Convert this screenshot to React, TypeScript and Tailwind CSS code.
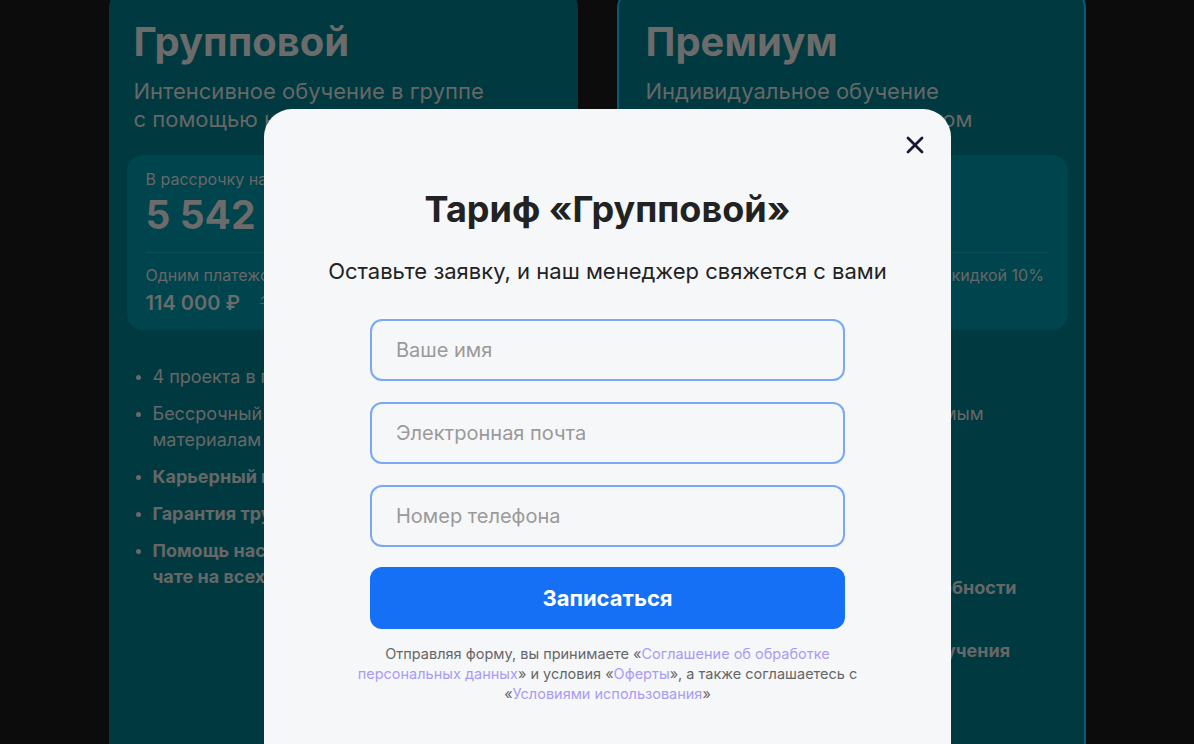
import React from "react";
import { X } from "lucide-react";

const font = { fontFamily: "Inter, 'Noto Sans', sans-serif" };

function Bullet({ children, bold = false }: { children: React.ReactNode; bold?: boolean }) {
  return (
    <li className={`flex items-start gap-[12px] text-[18px] leading-[26px] ${bold ? "font-bold" : "font-normal"}`}>
      <span className="mt-[11px] h-[5px] w-[5px] shrink-0 rounded-full bg-[#6a6a6a]" />
      <span>{children}</span>
    </li>
  );
}

function Card({
  title,
  sub1,
  sub2,
  premium = false,
  price,
  full,
  old,
  items,
}: {
  title: string;
  sub1: string;
  sub2: string;
  premium?: boolean;
  price: string;
  full: string;
  old: string;
  items: { t: React.ReactNode; b?: boolean }[];
}) {
  return (
    <div
      className={`-mt-[12px] h-[800px] w-[469px] shrink-0 rounded-[20px] bg-[#003a40] ${
        premium ? "border-2 border-[#0b5a74] pt-[28px]" : "pt-[30px]"
      }`}
    >
      <div className={premium ? "px-[27px]" : "px-[25px]"}>
        <h2 className="text-[40px] font-bold leading-[48px] text-[#6b6b6b]">{title}</h2>
        <p className="mt-[11px] text-[22px] leading-[28px] text-[#676767]">
          {sub1}
          <br />
          {sub2}
        </p>
      </div>
      <div className={`mt-[22px] rounded-[16px] bg-[#00444d] pb-[12px] pl-[19px] pr-[19px] pt-[14px] ${premium ? "mx-[16px]" : "mx-[18px]"}`}>
        <div className="text-[16px] leading-[20px] text-[#686868]">В рассрочку на 24 месяца</div>
        <div className="mt-[4px] text-[39px] font-bold leading-[44px] text-[#6b6b6b]">{price}</div>
        <div className="mt-[15px] h-px bg-[#0b5157]" />
        <div className="mt-[12px] text-[16px] leading-[20px] text-[#686868]">
          Одним платежом с дополнительной скидкой 10%
        </div>
        <div className="mt-[4px] flex items-baseline gap-[20px] text-[20px] font-semibold leading-[28px] text-[#6b6b6b]">
          <span>{full}</span>
          <span className="text-[18px] font-normal text-[#5c5c5c] line-through">{old}</span>
        </div>
      </div>
      <ul className="mt-[34px] flex flex-col gap-[11px] pl-[27px] pr-[20px] text-[#676767]">
        {items.map((it, i) => (
          <Bullet key={i} bold={it.b}>
            {it.t}
          </Bullet>
        ))}
      </ul>
    </div>
  );
}

export default function App() {
  return (
    <div className="relative h-[744px] w-full overflow-hidden bg-[#0c0c0c]" style={font}>
      <div className="flex justify-center gap-[39px]">
        <Card
          title="Групповой"
          sub1="Интенсивное обучение в группе"
          sub2="с помощью наставника"
          price="5 542 ₽/мес"
          full="114 000 ₽"
          old="126 700 ₽"
          items={[
            { t: "4 проекта в портфолио" },
            { t: <>Бессрочный доступ к<br />материалам курса</> },
            { t: "Карьерный консультант", b: true },
            { t: "Гарантия трудоустройства", b: true },
            { t: <>Помощь наставника в<br />чате на всех этапах</>, b: true },
          ]}
        />
        <Card
          premium
          title="Премиум"
          sub1="Индивидуальное обучение"
          sub2="с персональным наставником"
          price="9 450 ₽/мес"
          full="194 000 ₽"
          old="215 500 ₽"
          items={[
            { t: "8 проектов в портфолио" },
            { t: <>Бессрочный доступ к обновляемым<br />материалам</> },
            { t: "Карьерный консультант", b: true },
            { t: "Гарантия трудоустройства", b: true },
            { t: "Индивидуальный план", b: true },
            { t: "Программа под все ваши потребности", b: true },
            { t: <>Личный наставник<br />и сопровождение в течение обучения</>, b: true },
          ]}
        />
      </div>

      <div className="absolute left-[264px] top-[109px] h-[700px] w-[687px] rounded-[28px] bg-[#f6f7f9]">
        <button className="absolute right-[22px] top-[22px] flex h-[28px] w-[28px] items-center justify-center text-[#1b1836]">
          <X size={28} strokeWidth={2.4} />
        </button>
        <div className="flex flex-col items-center pt-[78px]">
          <h3 className="text-[36px] font-bold leading-[44px] text-[#222222]">Тариф «Групповой»</h3>
          <p className="mt-[25px] text-[22px] leading-[30px] text-[#222222]">
            Оставьте заявку, и наш менеджер свяжется с вами
          </p>
          <form className="mt-[33px] flex w-[475px] flex-col gap-[21px]">
            {["Ваше имя", "Электронная почта", "Номер телефона"].map((p) => (
              <input
                key={p}
                placeholder={p}
                className="h-[62px] w-full rounded-[12px] border-2 border-[#79a9f6] bg-transparent px-[24px] text-[20px] text-[#222] outline-none placeholder:text-[#9a9a9a]"
              />
            ))}
            <button
              type="button"
              className="mt-[-1px] h-[62px] w-full rounded-[12px] bg-[#1570f5] text-[22px] font-bold text-white"
            >
              Записаться
            </button>
          </form>
          <p className="mt-[15px] w-[520px] text-center text-[14.5px] leading-[20px] text-[#666666]">
            Отправляя форму, вы принимаете «<span className="text-[#a99cf3]">Соглашение об обработке персональных данных</span>» и условия «<span className="text-[#a99cf3]">Оферты</span>», а также соглашаетесь с «<span className="text-[#a99cf3]">Условиями использования</span>»
          </p>
        </div>
      </div>
    </div>
  );
}
